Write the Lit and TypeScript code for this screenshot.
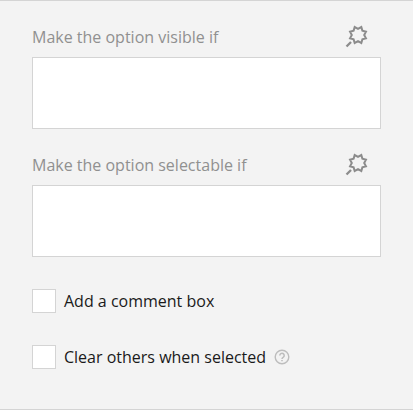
import { LitElement, html, css, svg } from "lit";
import { customElement, property } from "lit/decorators.js";

// Eight-pointed star outline, centred on the wand head.
const starPoints = Array.from({ length: 16 }, (_, i) => {
  const angle = ((i + 1) * Math.PI) / 8;
  const radius = i % 2 === 0 ? 8.6 : 6.2;
  return `${(13 + radius * Math.cos(angle)).toFixed(2)},${(10 + radius * Math.sin(angle)).toFixed(2)}`;
}).join(" ");

@customElement("condition-field")
class ConditionField extends LitElement {
  @property() label = "";

  static styles = css`
    :host {
      display: block;
    }
    .header {
      display: flex;
      justify-content: space-between;
      align-items: center;
      height: 24px;
      padding-right: 12px;
      margin-bottom: 8px;
      color: #909090;
    }
    .wand {
      display: block;
      width: 24px;
      height: 24px;
    }
    textarea {
      display: block;
      box-sizing: border-box;
      width: 100%;
      height: 72px;
      margin: 0;
      padding: 8px;
      border: 1px solid #d4d4d4;
      border-radius: 0;
      background: #fff;
      resize: none;
      outline: none;
      font: inherit;
    }
  `;

  render() {
    return html`
      <div class="header">
        <span>${this.label}</span>
        <svg class="wand" viewBox="0 0 24 24" fill="none" stroke="#8c8c8c" stroke-width="2">
          ${svg`<polygon points=${starPoints} />`}
          <path d="M6 17 1.5 21.5" stroke-width="2.3" />
        </svg>
      </div>
      <textarea aria-label=${this.label}></textarea>
    `;
  }
}

@customElement("check-row")
class CheckRow extends LitElement {
  @property() label = "";
  @property({ type: Boolean }) help = false;

  static styles = css`
    :host {
      display: block;
    }
    label {
      display: flex;
      align-items: center;
      height: 24px;
      color: #1a1a1a;
    }
    input {
      appearance: none;
      box-sizing: border-box;
      width: 24px;
      height: 24px;
      margin: 0 8px 0 0;
      border: 1px solid #d4d4d4;
      background: #fff;
    }
    .help {
      display: block;
      width: 16px;
      height: 16px;
      margin-left: 8px;
    }
  `;

  render() {
    return html`
      <label>
        <input type="checkbox" />
        <span>${this.label}</span>
        ${this.help
          ? html`<svg class="help" viewBox="0 0 16 16" fill="none" stroke="#bdbdbd">
              <circle cx="8" cy="8" r="6.8" stroke-width="1.4" />
              <path d="M5.8 6.4a2.2 2.2 0 1 1 3.5 1.8C8.4 8.8 8 9 8 10" stroke-width="1.5" />
              <path d="M8 10.9v1.4" stroke-width="1.6" />
            </svg>`
          : null}
      </label>
    `;
  }
}

@customElement("app-root")
class AppRoot extends LitElement {
  static styles = css`
    :host {
      display: block;
      box-sizing: border-box;
      height: 410px;
      padding: 24px 32px 0;
      border-top: 1px solid #d4d4d4;
      border-bottom: 1px solid #d4d4d4;
      background: #f3f3f3;
      font: 16px/24px "Open Sans", sans-serif;
    }
    .fields {
      display: grid;
      gap: 24px;
    }
    .checks {
      display: grid;
      gap: 32px;
      margin-top: 32px;
    }
  `;

  render() {
    return html`
      <div class="fields">
        <condition-field label="Make the option visible if"></condition-field>
        <condition-field label="Make the option selectable if"></condition-field>
      </div>
      <div class="checks">
        <check-row label="Add a comment box"></check-row>
        <check-row label="Clear others when selected" help></check-row>
      </div>
    `;
  }
}
